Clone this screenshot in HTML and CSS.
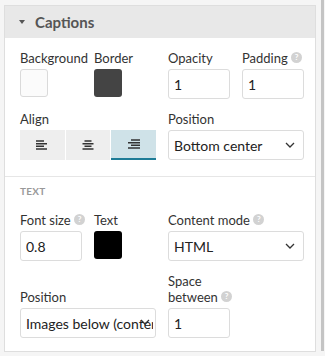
FILE: index.html
```html
<!DOCTYPE html>
<html lang="en">
<head>
  <meta charset="UTF-8">
  <title>Captions</title>
  <link rel="stylesheet" href="styles.css">
</head>
<body>
  <div class="page">
    <div class="panel">
      <div class="panel-head"><span class="caret"></span>Captions</div>

      <div class="panel-section">
        <div class="row">
          <div class="field">
            <label>Background</label>
            <div class="swatch swatch-light"></div>
          </div>
          <div class="field">
            <label>Border</label>
            <div class="swatch swatch-dark"></div>
          </div>
          <div class="field">
            <label>Opacity</label>
            <input class="text-input" type="text" value="1">
          </div>
          <div class="field">
            <label>Padding <span class="help">?</span></label>
            <input class="text-input" type="text" value="1">
          </div>
        </div>
        <div class="row">
          <div class="field wide">
            <label>Align</label>
            <div class="btn-group">
              <button class="align-btn">
                <svg width="12" height="10" viewBox="0 0 12 10"><path d="M0 1h8M0 3.7h11M0 6.3h8M0 9h11" stroke="#333" stroke-width="1.4"/></svg>
              </button>
              <button class="align-btn">
                <svg width="12" height="10" viewBox="0 0 12 10"><path d="M2.5 1h7M0.5 3.7h11M2.5 6.3h7M0.5 9h11" stroke="#333" stroke-width="1.4"/></svg>
              </button>
              <button class="align-btn selected">
                <svg width="12" height="10" viewBox="0 0 12 10"><path d="M3 1h9M0 3.7h12M3 6.3h9M0 9h12" stroke="#333" stroke-width="1.4"/></svg>
              </button>
            </div>
          </div>
          <div class="field wide">
            <label>Position</label>
            <div class="select-wrap">
              <select class="select"><option>Bottom center</option></select>
              <svg class="chevron" width="10" height="6" viewBox="0 0 10 6"><path d="M1 1l4 4 4-4" fill="none" stroke="#333" stroke-width="1.3"/></svg>
            </div>
          </div>
        </div>
      </div>

      <div class="panel-section">
        <div class="section-title">TEXT</div>
        <div class="row">
          <div class="field">
            <label>Font size <span class="help">?</span></label>
            <input class="text-input" type="text" value="0.8">
          </div>
          <div class="field">
            <label>Text</label>
            <div class="swatch swatch-black"></div>
          </div>
          <div class="field wide">
            <label>Content mode <span class="help">?</span></label>
            <div class="select-wrap">
              <select class="select"><option>HTML</option></select>
              <svg class="chevron" width="10" height="6" viewBox="0 0 10 6"><path d="M1 1l4 4 4-4" fill="none" stroke="#333" stroke-width="1.3"/></svg>
            </div>
          </div>
        </div>
        <div class="row">
          <div class="field wide">
            <label>Position</label>
            <div class="select-wrap">
              <select class="select tight"><option>Images below (content above)</option></select>
              <svg class="chevron chevron-tight" width="10" height="6" viewBox="0 0 10 6"><path d="M1 1l4 4 4-4" fill="none" stroke="#333" stroke-width="1.3"/></svg>
            </div>
          </div>
          <div class="field">
            <label>Space<br>between <span class="help">?</span></label>
            <input class="text-input" type="text" value="1">
          </div>
        </div>
      </div>
    </div>
    <div class="scrollbar"></div>
  </div>
</body>
</html>
```

FILE: styles.css
```css
body { margin: 0; background: #f5f5f5; font-family: Lato, "Open Sans", sans-serif; color: #333; }
.page { display: flex; padding: 5px 0 0 4px; height: 351px; }
.panel { width: 310px; border: 1px solid #dedede; background: #fff; height: 345px; }
.scrollbar { width: 3px; margin-left: 5px; background: #c4c4c4; height: 351px; margin-top: -5px; }

.panel-head { height: 32px; background: #e8e8e8; display: flex; align-items: center; padding-left: 14px; font-weight: bold; font-size: 15px; color: #555; }
.caret { width: 0; height: 0; border-left: 3.5px solid transparent; border-right: 3.5px solid transparent; border-top: 4px solid #555; margin-right: 10px; }

.panel-section { padding: 12px 12px 16px 15px; display: flex; flex-direction: column; gap: 12px; }
.panel-section + .panel-section { border-top: 1px solid #e6e6e6; padding-top: 7px; gap: 12px; }
.section-title { font-size: 10px; font-weight: bold; color: #999; letter-spacing: 0.3px; line-height: 14px; margin-bottom: 2px; }

.row { display: grid; grid-template-columns: repeat(4, 62px); column-gap: 12px; align-items: end; }
.field { display: flex; flex-direction: column; }
.field.wide { grid-column: span 2; }
.field label { font-size: 13px; line-height: 16px; margin-bottom: 3px; white-space: nowrap; color: #333; }

.help { display: inline-block; width: 11px; height: 11px; border-radius: 50%; background: #d2d2d2; color: #fff; font-size: 8px; font-weight: bold; line-height: 11px; text-align: center; vertical-align: top; margin-top: 2px; }

.swatch { width: 28px; height: 28px; border-radius: 3px; box-sizing: border-box; margin-bottom: 2px; }
.swatch-light { background: #fbfbfb; border: 1px solid #dadada; }
.swatch-dark { background: #444; }
.swatch-black { background: #000; }

.text-input { width: 62px; height: 30px; box-sizing: border-box; border: 1px solid #dcdcdc; border-radius: 3px; padding: 0 5px; font-family: Lato, sans-serif; font-size: 14px; color: #222; outline: none; }

.btn-group { display: flex; gap: 1px; height: 30px; }
.align-btn { flex: 1; border: none; background: #eee; display: flex; align-items: center; justify-content: center; padding: 0; }
.align-btn.selected { background: #cfe2e8; border-bottom: 2px solid #1e7c97; }

.select-wrap { position: relative; }
.select { width: 100%; height: 30px; box-sizing: border-box; border: 1px solid #dcdcdc; border-radius: 3px; background: #fff; padding: 0 26px 0 5px; font-family: Lato, sans-serif; font-size: 14px; color: #222; -webkit-appearance: none; appearance: none; outline: none; }
.select.tight { padding-right: 2px; }
.chevron { position: absolute; right: 9px; top: 12px; pointer-events: none; }
.chevron-tight { right: 6px; top: 11px; }
```
